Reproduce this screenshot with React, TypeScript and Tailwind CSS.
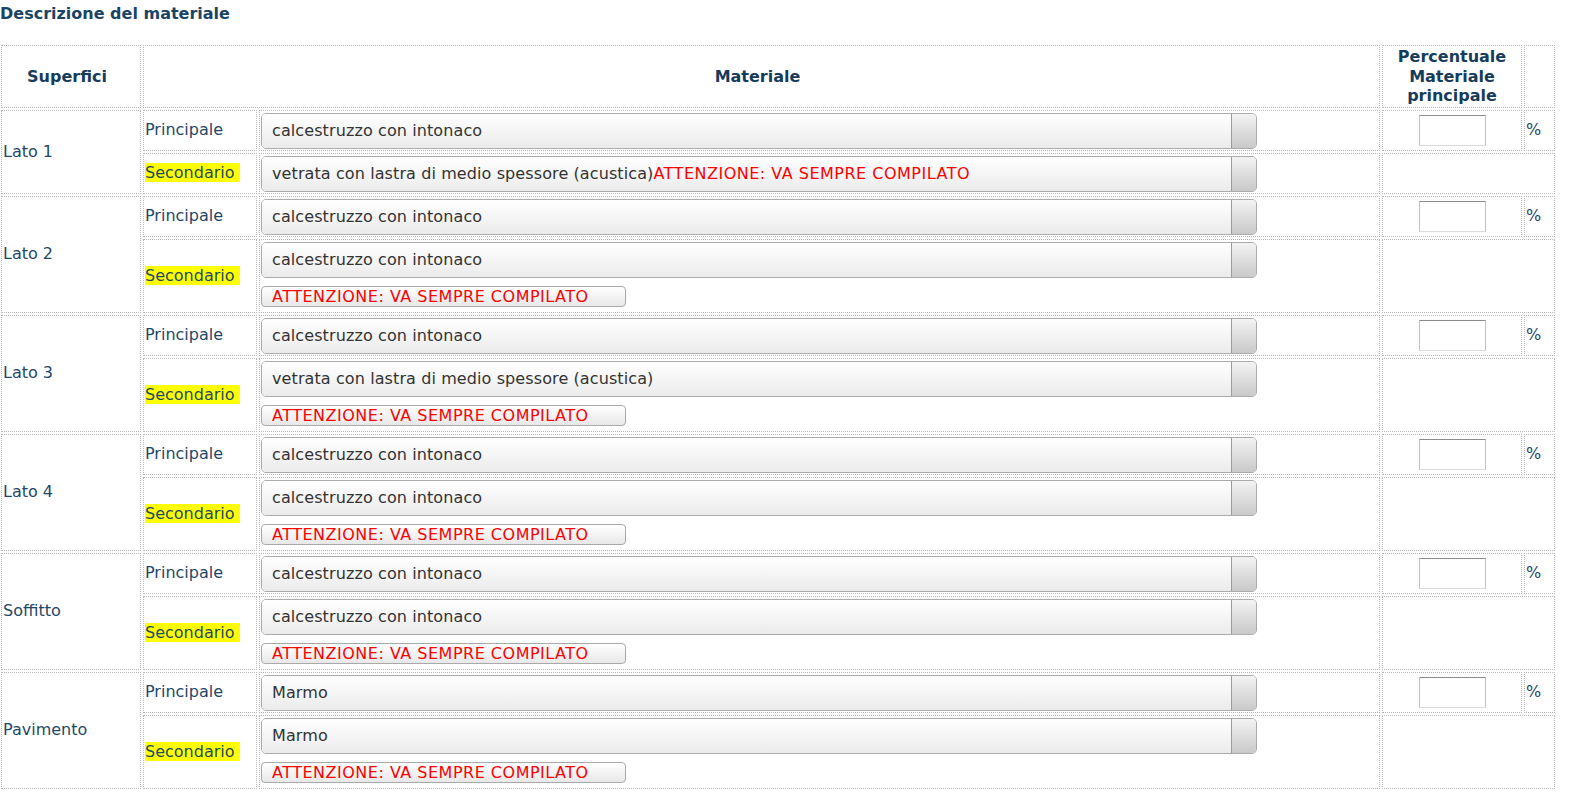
import React from "react";

type Group = {
  name: string;
  p: string;
  s: string;
  inlineErr?: boolean;
};

const groups: Group[] = [
  { name: "Lato 1", p: "calcestruzzo con intonaco", s: "vetrata con lastra di medio spessore (acustica)", inlineErr: true },
  { name: "Lato 2", p: "calcestruzzo con intonaco", s: "calcestruzzo con intonaco" },
  { name: "Lato 3", p: "calcestruzzo con intonaco", s: "vetrata con lastra di medio spessore (acustica)" },
  { name: "Lato 4", p: "calcestruzzo con intonaco", s: "calcestruzzo con intonaco" },
  { name: "Soffitto", p: "calcestruzzo con intonaco", s: "calcestruzzo con intonaco" },
  { name: "Pavimento", p: "Marmo", s: "Marmo" },
];

const ERR = "ATTENZIONE: VA SEMPRE COMPILATO";

const cell = "border border-dotted border-[#b9b9b9]";

function Select({ children }: { children: React.ReactNode }) {
  return (
    <div className="flex h-[36px] w-[996px] rounded-[5px] border border-[#ababab] overflow-hidden">
      <div className="flex flex-1 items-center pl-[10px] bg-gradient-to-b from-white to-[#ebebeb] border-r border-[#9c9c9c] text-[#333333] whitespace-nowrap leading-[20px] tracking-[0.1px]">
        {children}
      </div>
      <div className="w-[24px] bg-gradient-to-b from-[#f3f3f3] to-[#c9c9c9]" />
    </div>
  );
}

function ErrBox() {
  return (
    <div className="mt-[8px] mb-[4px] flex h-[21px] w-[365px] items-center rounded-[4px] border border-[#a9a9a9] bg-gradient-to-b from-white to-[#e8e8e8] pl-[10px] text-[#ff0000] leading-[19px] tracking-[0.5px] whitespace-nowrap">
      {ERR}
    </div>
  );
}

export default function App() {
  return (
    <div className="bg-white min-h-[811px] w-[1584px] font-['DejaVu_Sans',Verdana,sans-serif] text-[16px] text-[#1f4868]">
      <div className="pt-[4px] leading-[20px] font-bold text-[#1a4466]">Descrizione del materiale</div>
      <table className="mt-[19px] -ml-px table-fixed border-separate border-spacing-[2px] w-[1558px]">
        <colgroup>
          <col className="w-[140px]" />
          <col className="w-[114px]" />
          <col className="w-[1121px]" />
          <col className="w-[140px]" />
          <col className="w-[31px]" />
        </colgroup>
        <thead>
          <tr>
            <th className={`${cell} text-center align-middle font-bold text-[#163c5c] leading-[19px] py-px pr-[8px]`}>Superfici</th>
            <th colSpan={2} className={`${cell} text-center align-middle font-bold text-[#163c5c] leading-[19px] py-px pr-[8px]`}>Materiale</th>
            <th className={`${cell} text-center align-middle font-bold text-[#163c5c] leading-[19.5px] py-px`}>
              Percentuale
              <br />
              Materiale
              <br />
              principale
            </th>
            <th className={cell}></th>
          </tr>
        </thead>
        <tbody>
          {groups.map((g) => (
            <React.Fragment key={g.name}>
              <tr>
                <td rowSpan={2} className={`${cell} align-middle pl-[1px] leading-[20px]`}>
                  {g.name}
                </td>
                <td className={`${cell} align-middle pl-[1px] leading-[20px]`}>Principale</td>
                <td className={`${cell} align-top pl-[1px] pt-[2px] pb-[1px]`}>
                  <Select>{g.p}</Select>
                </td>
                <td className={`${cell} align-middle text-center`}>
                  <input
                    type="text"
                    className="w-[67px] h-[31px] border border-t-[#8c8c8c] border-x-[#c2c2c2] border-b-[#dcdcdc] bg-white align-middle"
                  />
                </td>
                <td className={`${cell} align-middle pl-[1px] leading-[20px]`}>%</td>
              </tr>
              <tr>
                <td className={`${cell} align-middle pl-[1px] leading-[20px]`}>
                  <span className="bg-[#ffff00] text-[#1f4868]">Secondario&nbsp;</span>
                </td>
                <td className={`${cell} align-top pl-[1px] pt-[2px] pb-[1px]`}>
                  {g.inlineErr ? (
                    <Select>
                      {g.s}
                      <span className="text-[#ff0000] tracking-[0.5px]">{ERR}</span>
                    </Select>
                  ) : (
                    <>
                      <Select>{g.s}</Select>
                      <ErrBox />
                    </>
                  )}
                </td>
                <td colSpan={2} className={cell}></td>
              </tr>
            </React.Fragment>
          ))}
        </tbody>
      </table>
    </div>
  );
}
